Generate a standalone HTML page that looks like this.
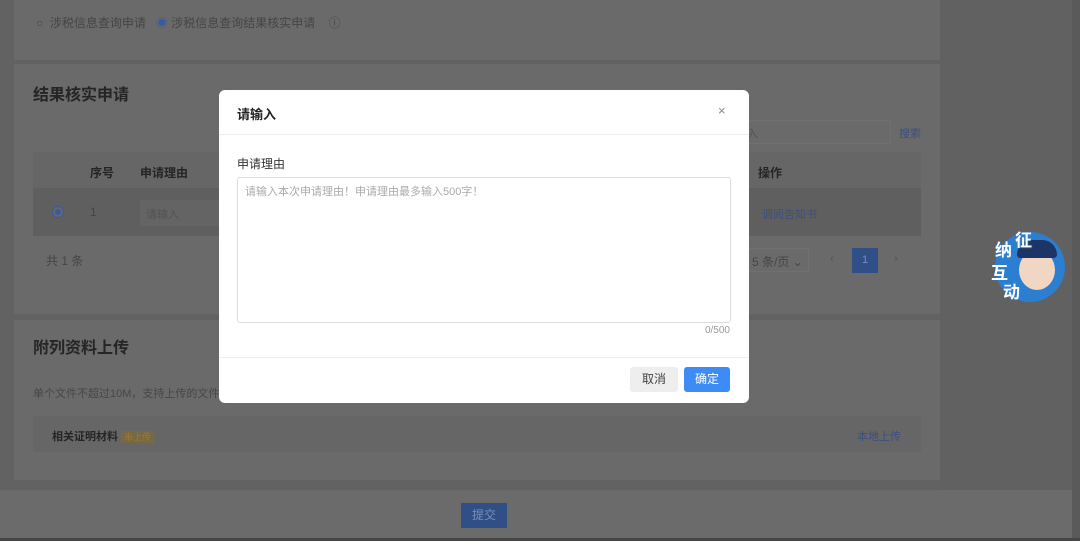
<!DOCTYPE html>
<html><head><meta charset="utf-8"><style>
*{margin:0;padding:0;box-sizing:border-box}
body{width:1080px;height:541px;overflow:hidden;background:#626262;font-family:"Liberation Sans","Noto Sans CJK SC",sans-serif;position:relative;color:#222}
.a{position:absolute;white-space:nowrap}
.card{background:#6a6a6a}
.t{color:#252525}
.g{color:#454545;font-size:12px}
.l{color:#3d4f80;font-size:11px}
</style></head><body>
<div class="a card" style="left:14px;top:0;width:926px;height:60px"></div>
<div class="a card" style="left:14px;top:64px;width:926px;height:250px"></div>
<div class="a card" style="left:14px;top:320px;width:926px;height:160px"></div>
<div class="a" style="left:940px;top:0;width:132px;height:490px;background:#616161"></div>
<div class="a" style="left:1072px;top:0;width:8px;height:541px;background:#5a5a5a"></div>
<div class="a" style="left:0;top:490px;width:1072px;height:51px;background:#6b6b6b"></div>
<div class="a" style="left:0;top:538px;width:1080px;height:3px;background:#464646"></div>

<div class="a g" style="left:36px;top:14px;">○ &nbsp;涉税信息查询申请 &nbsp;&nbsp;<span style="color:#3a5aa0">◉</span> 涉税信息查询结果核实申请 &nbsp;&nbsp;&nbsp;ⓘ</div>
<div class="a t" style="left:33px;top:81px;font-size:16px;font-weight:bold">结果核实申请</div>
<div class="a" style="left:33px;top:152px;width:888px;height:36px;background:#666"></div>
<div class="a" style="left:33px;top:188px;width:888px;height:48px;background:#5f5f5f"></div>
<div class="a t" style="left:90px;top:164px;font-size:12px;font-weight:bold">序号</div>
<div class="a t" style="left:140px;top:164px;font-size:12px;font-weight:bold">申请理由</div>
<div class="a t" style="left:758px;top:164px;font-size:12px;font-weight:bold">操作</div>
<div class="a" style="left:52px;top:206px;width:12px;height:12px;border-radius:50%;border:1px solid #3a5aa0;background:#676767"><div style="width:6px;height:6px;margin:2px;border-radius:50%;background:#3a5aa0"></div></div>
<div class="a g" style="left:90px;top:205px">1</div>
<div class="a" style="left:140px;top:200px;width:80px;height:26px;background:#646464;color:#525252;font-size:11px;padding:6px 6px">请输入</div>
<div class="a l" style="left:762px;top:206px">调阅告知书</div>
<div class="a" style="left:740px;top:120px;width:151px;height:24px;border:1px solid #707070;color:#525252;font-size:11px;padding:4px 6px">入</div>
<div class="a l" style="left:899px;top:125px">搜索</div>
<div class="a g" style="left:46px;top:252px">共 1 条</div>
<div class="a" style="left:745px;top:248px;width:64px;height:24px;border:1px solid #707070;color:#454545;font-size:12px;padding:4px 6px">5 条/页 ⌄</div>
<div class="a" style="left:830px;top:253px;color:#525252;font-size:11px">‹</div>
<div class="a" style="left:852px;top:248px;width:26px;height:25px;background:#2f4f86;color:#7a8fb8;font-size:11px;text-align:center;line-height:25px">1</div>
<div class="a" style="left:894px;top:253px;color:#525252;font-size:11px">›</div>

<div class="a t" style="left:33px;top:334px;font-size:16px;font-weight:bold">附列资料上传</div>
<div class="a" style="left:33px;top:385px;font-size:11px;color:#474747">单个文件不超过10M，支持上传的文件</div>
<div class="a" style="left:33px;top:416px;width:888px;height:36px;background:#666"></div>
<div class="a t" style="left:52px;top:428px;font-size:11px;font-weight:bold">相关证明材料 <span style="background:#786945;color:#9a7a35;font-size:9px;font-weight:normal;padding:1px 3px">未上传</span></div>
<div class="a l" style="left:857px;top:428px">本地上传</div>
<div class="a" style="left:461px;top:503px;width:46px;height:25px;background:#2f4f86;color:#7a8fb8;font-size:12px;text-align:center;line-height:25px">提交</div>

<div class="a" style="left:987px;top:226px;width:84px;height:78px">
<div class="a" style="left:8px;top:6px;width:70px;height:70px;border-radius:50%;background:#2c7fd0"></div>
<div class="a" style="left:32px;top:24px;width:36px;height:40px;border-radius:50%;background:#f2d6c4"></div>
<div class="a" style="left:30px;top:14px;width:40px;height:18px;border-radius:18px 18px 4px 4px;background:#1d3566"></div>
<div class="a" style="left:28px;top:0px;color:#fff;font-weight:bold;font-size:17px;text-shadow:0 0 2px #2c7fd0">征</div>
<div class="a" style="left:8px;top:10px;color:#fff;font-weight:bold;font-size:17px;text-shadow:0 0 2px #2c7fd0">纳</div>
<div class="a" style="left:4px;top:33px;color:#fff;font-weight:bold;font-size:17px;text-shadow:0 0 2px #2c7fd0">互</div>
<div class="a" style="left:16px;top:52px;color:#fff;font-weight:bold;font-size:17px;text-shadow:0 0 2px #2c7fd0">动</div>
</div>

<div class="a" style="left:219px;top:90px;width:530px;height:313px;background:#fff;border-radius:6px">
<div class="a" style="left:18px;top:14px;font-size:13px;font-weight:bold;color:#222">请输入</div>
<div class="a" style="left:499px;top:13px;font-size:13px;color:#888">×</div>
<div class="a" style="left:0;top:44px;width:530px;height:1px;background:#eee"></div>
<div class="a" style="left:18px;top:65px;font-size:12px;color:#333">申请理由</div>
<div class="a" style="left:18px;top:87px;width:494px;height:146px;border:1px solid #ddd;border-radius:3px;padding:5px 7px;font-size:11px;color:#aaa">请输入本次申请理由！申请理由最多输入500字！</div>
<div class="a" style="right:19px;top:235px;font-size:10px;color:#999">0/500</div>
<div class="a" style="left:0;top:267px;width:530px;height:1px;background:#eee"></div>
<div class="a" style="left:411px;top:277px;width:48px;height:25px;background:#eee;border-radius:3px;font-size:12px;color:#444;text-align:center;line-height:25px">取消</div>
<div class="a" style="left:465px;top:277px;width:46px;height:25px;background:#3d8cf5;border-radius:3px;font-size:12px;color:#fff;text-align:center;line-height:25px">确定</div>
</div>
</body></html>
